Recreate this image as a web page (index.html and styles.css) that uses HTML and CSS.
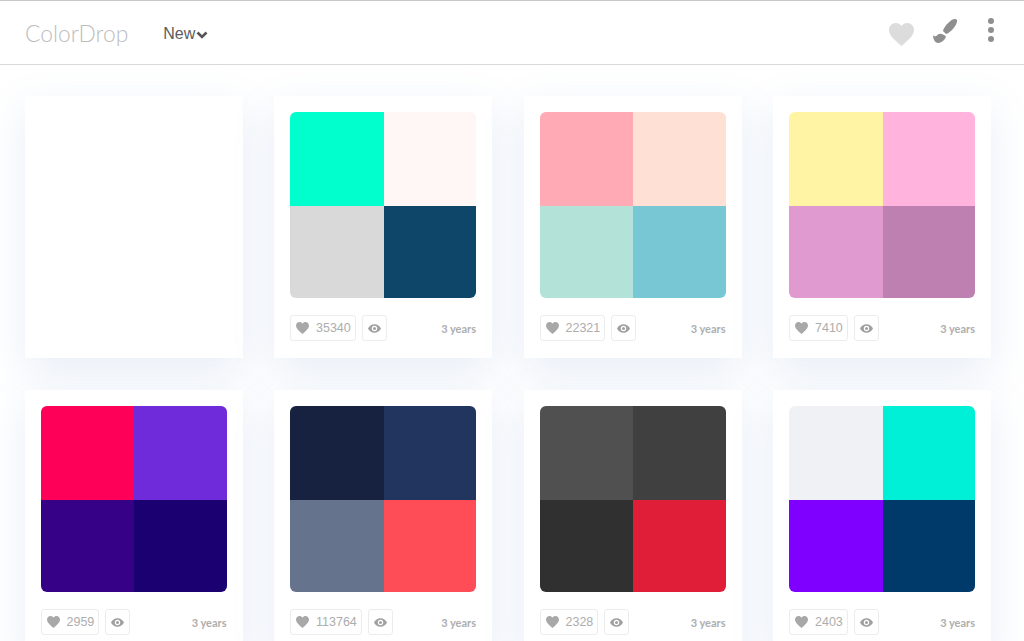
FILE: index.html
```html
<!DOCTYPE html>
<html lang="en">
<head>
  <meta charset="UTF-8">
  <meta name="viewport" content="width=device-width, initial-scale=1.0">
  <title>ColorDrop</title>
  <link rel="stylesheet" href="styles.css">
</head>
<body>

  <svg class="sprites">
    <symbol id="heart" viewBox="0 0 24 22"><path d="M12 22C5 16 0 12 0 6.500 0 2.800 2.900 0 6.500 0 8.700 0 10.800 1.100 12 2.900 13.200 1.100 15.300 0 17.500 0 21.100 0 24 2.800 24 6.500 24 12 19 16 12 22Z" /></symbol>
    <symbol id="eye" viewBox="0 0 24 16"><path fill-rule="evenodd" d="M12 0C6.500 0 2.200 3.300 0 8c2.200 4.700 6.500 8 12 8s9.800-3.300 12-8c-2.200-4.700-6.500-8-12-8Zm0 13a5 5 0 1 1 0-10 5 5 0 0 1 0 10Zm0-2.200a2.800 2.800 0 1 0 0-5.600 2.800 2.800 0 0 0 0 5.600Z" /></symbol>
  </svg>

  <header class="topbar">
    <div class="logo">ColorDrop</div>
    <div class="sort">New<svg class="chevron" viewBox="0 0 12 8"><path d="M1.500 1.500 6 6l4.500-4.500" /></svg></div>
    <div class="topbar-icons">
      <svg class="icon-fav"><use href="#heart" /></svg>
      <svg class="icon-brush" viewBox="0 0 24 24">
        <path d="M24 1C23 -.5 20 0 18 1.500 14 4.500 10.500 9 10 12L13 15C16.500 14 21 9.500 23 5.500 24 3.500 24.500 2 24 1Z" />
        <path d="M0 16C1 18 3.500 17.500 5 15.500 7 14 10 15 13 17.500 12 21 8.500 24 5 24 2 24 0 20 0 16Z" />
      </svg>
      <div class="dots"><span></span><span></span><span></span></div>
    </div>
  </header>

  <main class="grid">
    <div class="card"></div>

    <div class="card">
      <div class="swatch">
        <div style="background:#00ffcc"></div><div style="background:#fff6f6"></div>
        <div style="background:#d9d9d9"></div><div style="background:#0e4669"></div>
      </div>
      <div class="card-foot">
        <div class="btn like"><svg class="heart"><use href="#heart" /></svg>35340</div>
        <div class="btn view"><svg class="eye"><use href="#eye" /></svg></div>
        <div class="age">3 years</div>
      </div>
    </div>

    <div class="card">
      <div class="swatch">
        <div style="background:#ffaab5"></div><div style="background:#ffe0d5"></div>
        <div style="background:#b3e2d8"></div><div style="background:#77c8d4"></div>
      </div>
      <div class="card-foot">
        <div class="btn like"><svg class="heart"><use href="#heart" /></svg>22321</div>
        <div class="btn view"><svg class="eye"><use href="#eye" /></svg></div>
        <div class="age">3 years</div>
      </div>
    </div>

    <div class="card">
      <div class="swatch">
        <div style="background:#fff4a3"></div><div style="background:#ffb3dd"></div>
        <div style="background:#e09ad0"></div><div style="background:#bd80b1"></div>
      </div>
      <div class="card-foot">
        <div class="btn like"><svg class="heart"><use href="#heart" /></svg>7410</div>
        <div class="btn view"><svg class="eye"><use href="#eye" /></svg></div>
        <div class="age">3 years</div>
      </div>
    </div>

    <div class="card">
      <div class="swatch">
        <div style="background:#ff0058"></div><div style="background:#6f2ada"></div>
        <div style="background:#360087"></div><div style="background:#1b0072"></div>
      </div>
      <div class="card-foot">
        <div class="btn like"><svg class="heart"><use href="#heart" /></svg>2959</div>
        <div class="btn view"><svg class="eye"><use href="#eye" /></svg></div>
        <div class="age">3 years</div>
      </div>
    </div>

    <div class="card">
      <div class="swatch">
        <div style="background:#162240"></div><div style="background:#22355e"></div>
        <div style="background:#66738d"></div><div style="background:#ff4d58"></div>
      </div>
      <div class="card-foot">
        <div class="btn like"><svg class="heart"><use href="#heart" /></svg>113764</div>
        <div class="btn view"><svg class="eye"><use href="#eye" /></svg></div>
        <div class="age">3 years</div>
      </div>
    </div>

    <div class="card">
      <div class="swatch">
        <div style="background:#505050"></div><div style="background:#404040"></div>
        <div style="background:#303030"></div><div style="background:#e01e37"></div>
      </div>
      <div class="card-foot">
        <div class="btn like"><svg class="heart"><use href="#heart" /></svg>2328</div>
        <div class="btn view"><svg class="eye"><use href="#eye" /></svg></div>
        <div class="age">3 years</div>
      </div>
    </div>

    <div class="card">
      <div class="swatch">
        <div style="background:#eff1f4"></div><div style="background:#00efd7"></div>
        <div style="background:#7f00ff"></div><div style="background:#003a6b"></div>
      </div>
      <div class="card-foot">
        <div class="btn like"><svg class="heart"><use href="#heart" /></svg>2403</div>
        <div class="btn view"><svg class="eye"><use href="#eye" /></svg></div>
        <div class="age">3 years</div>
      </div>
    </div>
  </main>

</body>
</html>
```

FILE: styles.css
```css
html, body {
  height: 641px;
  overflow: hidden;
}

body {
  margin: 0;
  background: #fff;
  font-family: 'Liberation Sans', Arial, sans-serif;
}

.sprites {
  display: none;
}

.topbar {
  display: flex;
  align-items: center;
  height: 63px;
  padding: 0 25px;
  background: #fff;
  border-top: 1px solid #c9c9c9;
  border-bottom: 1px solid #d9d9d9;
}

.logo {
  font-family: 'Lato', sans-serif;
  font-weight: 300;
  font-size: 22.800px;
  color: #bdbdbd;
}

.sort {
  display: flex;
  align-items: center;
  margin-left: 35px;
  margin-top: 3px;
  font-size: 16px;
  color: #5c5c5c;
}

.chevron {
  width: 12px;
  height: 8px;
  margin-left: 1px;
  margin-top: 2px;
  fill: none;
  stroke: #555;
  stroke-width: 2.600;
}

.topbar-icons {
  display: flex;
  align-items: center;
  margin-left: auto;
}

.icon-fav {
  width: 25px;
  height: 23px;
  margin-top: 4px;
  fill: #dcdcdc;
}

.icon-brush {
  width: 24px;
  height: 24px;
  margin-left: 19px;
  margin-bottom: 3px;
  fill: #8f8f8f;
}

.dots {
  display: flex;
  flex-direction: column;
  gap: 3px;
  margin-left: 31px;
  margin-right: 5px;
  margin-bottom: 6px;
}

.dots span {
  width: 6px;
  height: 6px;
  border-radius: 50%;
  background: #8f8f8f;
}

.grid {
  display: grid;
  grid-template-columns: repeat(4, 218px);
  gap: 32px 31.500px;
  padding: 31px 0 0 24.500px;
}

.card {
  box-sizing: border-box;
  height: 262px;
  padding: 16px;
  background: #fff;
  box-shadow: 0 14px 40px rgba(100, 140, 200, 0.150);
}

.swatch {
  display: grid;
  grid-template-columns: 93.500px 1fr;
  grid-template-rows: 94px 92px;
  height: 186px;
  overflow: hidden;
  border-radius: 6px;
}

.card-foot {
  display: flex;
  align-items: center;
  margin-top: 17px;
}

.btn {
  box-sizing: border-box;
  display: flex;
  align-items: center;
  height: 26px;
  border: 1px solid #ececec;
  border-radius: 3px;
  color: #adadad;
  font-size: 12.500px;
}

.like {
  padding: 0 4px 0 5px;
}

.view {
  justify-content: center;
  width: 25px;
  margin-left: 6px;
}

.heart {
  width: 13px;
  height: 12px;
  margin-right: 7px;
  fill: #a8a8a8;
}

.eye {
  width: 13px;
  height: 9px;
  fill: #a0a0a0;
}

.age {
  margin-left: auto;
  font-family: 'Lato', sans-serif;
  font-weight: 700;
  font-size: 11px;
  color: #aeaeae;
}
```
